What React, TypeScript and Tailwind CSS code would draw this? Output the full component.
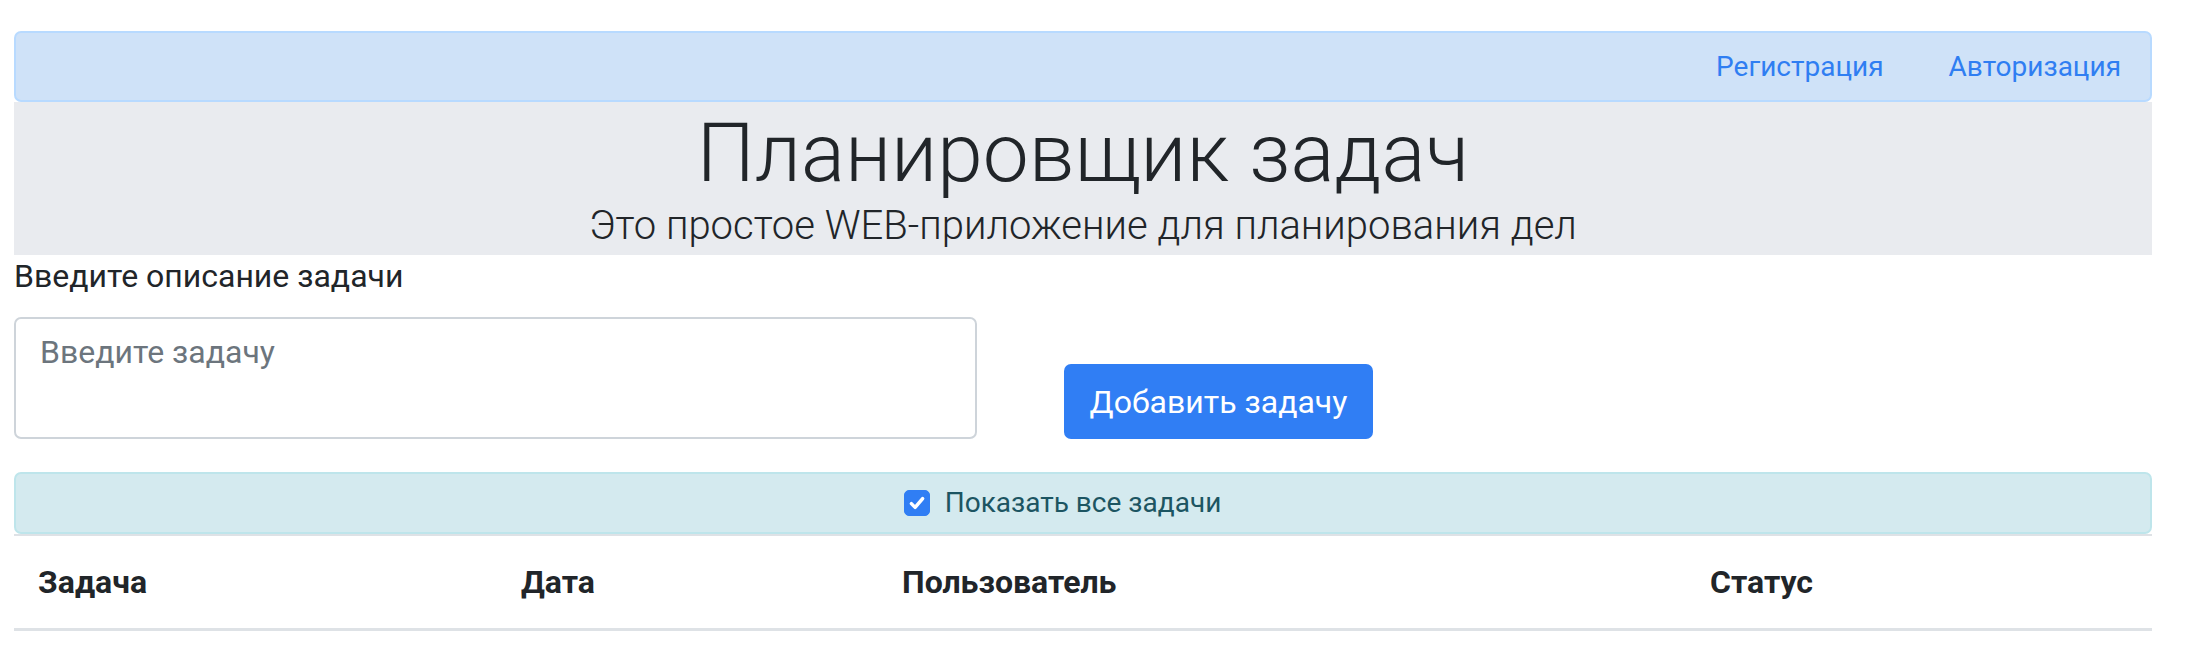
import { useState } from "react";

const font = { fontFamily: "Roboto, 'Liberation Sans', sans-serif" };

function CheckBox({ checked, onChange }: { checked: boolean; onChange: () => void }) {
  return (
    <button
      type="button"
      onClick={onChange}
      className={
        "absolute right-full top-1/2 mr-[15px] flex h-[26px] w-[26px] -translate-y-1/2 items-center justify-center rounded-[5px] border " +
        (checked ? "border-[#307ef4] bg-[#307ef4]" : "border-[#adb5bd] bg-white")
      }
    >
      {checked && (
        <svg viewBox="0 0 16 16" className="h-[20px] w-[20px]" fill="none">
          <path d="M3.5 8.5l3 3 6-7" stroke="white" strokeWidth="2.8" strokeLinecap="round" strokeLinejoin="round" />
        </svg>
      )}
    </button>
  );
}

export default function App() {
  const [task, setTask] = useState("");
  const [showAll, setShowAll] = useState(true);

  return (
    <div className="min-h-screen bg-white pl-[14px] pr-[34px] pt-[31px] text-[32px] text-[#212529]" style={font}>
      <nav className="flex h-[71px] items-center justify-end gap-[65px] rounded-[7px] border-2 border-[#b8daff] bg-[#cfe2f8] pr-[29px]">
        <a href="#" className="text-[28px] text-[#2f7ef2]">Регистрация</a>
        <a href="#" className="text-[28px] text-[#2f7ef2]">Авторизация</a>
      </nav>

      <div className="flex h-[153px] flex-col items-center bg-[#e9ebef]">
        <h1 className="mt-[3px] text-[82px] font-light leading-[96px]">Планировщик задач</h1>
        <p className="mt-[1px] text-[40px] font-light leading-[48px]">
          Это простое WEB-приложение для планирования дел
        </p>
      </div>

      <div className="flex items-end">
        <div className="flex w-[963px] flex-col">
          <label className="leading-[42px]">Введите описание задачи</label>
          <textarea
            value={task}
            onChange={(e) => setTask(e.target.value)}
            placeholder="Введите задачу"
            className="mt-[20px] h-[122px] resize-none rounded-[7px] border-2 border-[#ced4da] px-[24px] pt-[9px] pb-[12px] leading-[48px] placeholder:text-[#6c757d] focus:outline-none"
          />
        </div>
        <button
          type="button"
          className="ml-[87px] h-[75px] w-[309px] rounded-[7px] bg-[#307ef4] text-[32px] text-white"
        >
          Добавить задачу
        </button>
      </div>

      <div className="mt-[33px] flex h-[62px] items-center justify-center rounded-[7px] border-2 border-[#bee5eb] bg-[#d4eaef] text-[28px] text-[#1c5562]">
        <label className="relative leading-[42px]">
          <CheckBox checked={showAll} onChange={() => setShowAll(!showAll)} />
          Показать все задачи
        </label>
      </div>

      <table className="w-full border-collapse">
        <thead>
          <tr className="border-t-2 border-b-[3px] border-[#dee2e6]">
            <th className="w-[483px] px-[24px] py-[22px] text-left font-bold leading-[48px]">Задача</th>
            <th className="w-[381px] px-[24px] py-[22px] text-left font-bold leading-[48px]">Дата</th>
            <th className="w-[808px] px-[24px] py-[22px] text-left font-bold leading-[48px]">Пользователь</th>
            <th className="px-[24px] py-[22px] text-left font-bold leading-[48px]">Статус</th>
          </tr>
        </thead>
        <tbody></tbody>
      </table>
    </div>
  );
}
